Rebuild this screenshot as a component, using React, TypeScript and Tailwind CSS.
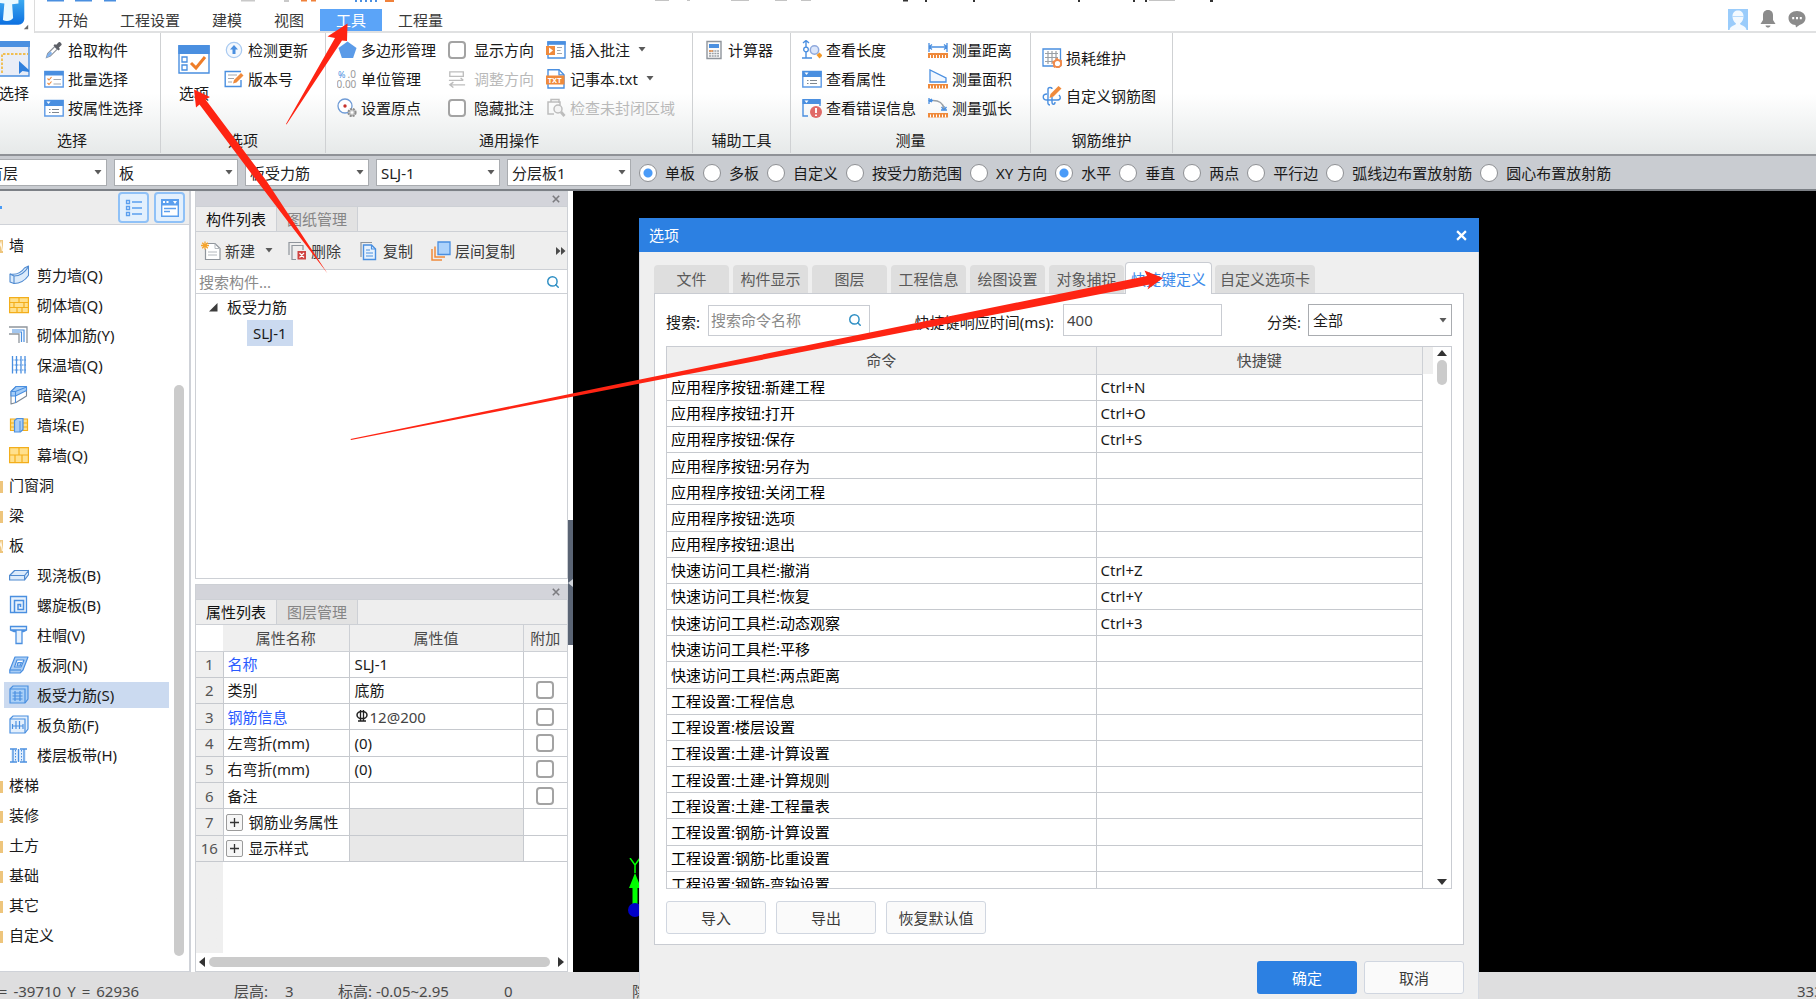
import React from "react";
import { Search } from "lucide-react";

const B = "#4a8fe0";
const O = "#ef8a3c";
const G = "#9a9a9a";

type IconProps = { name: string; className?: string };

const drawings: Record<string, React.ReactNode> = {
  dropper: (
    <>
      <path d="M2.5 17.5l1.2-4 7-7 2.6 2.6-7 7z" fill="#fff" stroke="#8a9099" strokeWidth="1.2" />
      <path d="M2 18l2-4.500 3-2 1 2-3 3z" fill="#7fb2f0" />
      <path d="M9.500 5.500l5 5 1.500-1.500-1.200-1.300 2.700-2.700c1-1-1.800-3.800-2.800-2.800L12 4.900 11 4z" fill="#5c5f66" />
    </>
  ),
  batch: (
    <>
      <path d="M.8 2.500h18.400v15.500H.8z" fill="#fff" stroke="#5d9ae6" strokeWidth="1.4" />
      <path d="M.5 2h19v4.500H.5z" fill={B} />
      <path d="M3.500 9.500l1.500 1.500 2.500-3M3.500 14l1.500 1.500 2.500-3" fill="none" stroke={O} strokeWidth="1.1" />
      <path d="M9.500 10.500h7.500M9.500 15h7.500" stroke="#a3a8ae" strokeWidth="1.2" />
    </>
  ),
  props: (
    <>
      <path d="M.8 2.500h18.400v15.500H.8z" fill="#fff" stroke="#5d9ae6" strokeWidth="1.4" />
      <path d="M.5 2h19v6H.5z" fill={B} />
      <path d="M2.500 3.500h4L4.500 6z" fill="#fff" />
      <path d="M5 11.500h1.500M8 11.500h7M5 14.500h1.500M8 14.500h7" stroke="#7f8790" strokeWidth="1.2" />
    </>
  ),
  update: (
    <>
      <circle cx="10" cy="10" r="7.700" fill="#f3f8fe" stroke="#a9caf1" strokeWidth="1.200" />
      <path d="M10 5l4 4.500h-2.500V14h-3V9.500H6z" fill={B} />
    </>
  ),
  version: (
    <>
      <path d="M17 11v6.500H1.200V2.500H17" fill="#fff" stroke={B} strokeWidth="1.400" />
      <path d="M4 6h9M4 9.500h6M4 13h4" stroke="#a3a8ae" strokeWidth="1.200" />
      <path d="M9 14.500l1-3.500 7-7 2.500 2.500-7 7z" fill={O} />
    </>
  ),
  pentagon: <path d="M10.500 1.500l9 6.500-3.400 10H4.900L1.500 8z" fill="#5b9be8" />,
  units: (
    <>
      <text x="1" y="9" fontSize="9" fill={B} fontFamily="Noto Sans">%</text>
      <text x="10.500" y="9" fontSize="10" fill={G} fontFamily="Noto Sans">.0</text>
      <text x="-.500" y="18.500" fontSize="10" fill={G} fontFamily="Noto Sans">0.00</text>
    </>
  ),
  origin: (
    <>
      <circle cx="8" cy="8" r="7" fill="#fff" stroke="#6f9bd6" strokeWidth="1.300" />
      <circle cx="8" cy="8" r="1.700" fill="#c8322c" />
      <circle cx="15" cy="14.500" r="3.600" fill="#c9c9c9" stroke="#8e8e8e" strokeWidth="2" strokeDasharray="2 .9" />
      <circle cx="15" cy="14.500" r="1.300" fill="#fff" />
    </>
  ),
  adjust: (
    <g fill="none" stroke="#bdbdbd" strokeWidth="1.500">
      <path d="M2 2h15v5H2zM1 11.500h16M14 9l3 2.500M19 16.500H3M6 13.500l-4 3 4 3" />
    </g>
  ),
  note: (
    <>
      <path d="M2 2h17v16H2z" fill="#fff" stroke={B} strokeWidth="1.400" />
      <path d="M1.300 1.200h18.400v3.600H1.300z" fill={B} />
      <path d="M0 6h9v9H0z" fill={O} />
      <path d="M3 7.500v6l4-3z" fill="#fff" />
      <path d="M11 7.500h5M11 10.500h3.500M11 13.500h5" stroke="#a3a8ae" strokeWidth="1.200" />
    </>
  ),
  txt: (
    <>
      <path d="M2 .8h11l5 5V19H2z" fill="#fff" stroke={B} strokeWidth="1.400" />
      <path d="M13 .8v5h5" fill="none" stroke={B} strokeWidth="1.300" />
      <path d="M0 6.500h18.500v9H0z" fill={O} />
      <text x="1.800" y="14" fontSize="7.500" fontWeight="700" fill="#fff" fontFamily="Noto Sans">TXT</text>
    </>
  ),
  region: (
    <g fill="none" stroke="#bdbdbd" strokeWidth="1.500">
      <path d="M5 4V1.500h8V5M8 16H2V4h12v3" />
      <circle cx="12" cy="11" r="4" fill="#f4f4f4" />
      <path d="M15 14l3.500 4" strokeWidth="2.800" />
    </g>
  ),
  calc: (
    <>
      <path d="M3 1.500h14v17H3z" fill="#fafafa" stroke="#8f959c" strokeWidth="1.400" />
      <path d="M5 4h10v4H5z" fill={B} />
      <path d="M5 11h10M5 13.500h10M5 16h10" stroke="#9aa0a6" strokeWidth="1.300" strokeDasharray="2 .7" />
      <path d="M5 11h4" stroke={O} strokeWidth="1.300" />
    </>
  ),
  length: (
    <>
      <path d="M4 0v18M1 3l3-2.500L7 3M0 18h10" fill="none" stroke={B} strokeWidth="1.400" />
      <circle cx="4" cy="9.500" r="2.300" fill="#fff" stroke={B} strokeWidth="1.300" />
      <circle cx="12.500" cy="10" r="4.200" fill="#dbe6fb" stroke="#8fa9dd" strokeWidth="1.500" />
      <path d="M14.500 15l3-2.500 3 3-3 3z" fill="#f39a2a" />
    </>
  ),
  error: (
    <>
      <path d="M6 18H1V2h17v6" fill="none" stroke={B} strokeWidth="1.400" />
      <path d="M.5 1h18v5H.5z" fill={B} />
      <path d="M2.500 2.500h4L4.500 5z" fill="#fff" />
      <circle cx="14" cy="14" r="6" fill="#e06a68" />
      <path d="M14 10v5M14 16.500v1.500" stroke="#fff" strokeWidth="1.900" />
    </>
  ),
  distance: (
    <>
      <path d="M1 3v9M19 3v9M1 7h18M4 4.500L1 7l3 2.500M16 4.500L19 7l-3 2.500" fill="none" stroke={B} strokeWidth="1.300" />
      <path d="M0 13h20v5H0z" fill={O} />
      <path d="M2.500 18v-3M5.500 18v-3M8.500 18v-3M11.500 18v-3M14.500 18v-3M17.500 18v-3" stroke="#fff" />
    </>
  ),
  area: (
    <>
      <path d="M2 13V1l16 8v4z" fill="#f2f7fe" stroke={B} strokeWidth="1.300" />
      <path d="M0 15h20v4.500H0z" fill={O} />
      <path d="M2.500 19.500v-3M5.500 19.500v-3M8.500 19.500v-3M11.500 19.500v-3M14.500 19.500v-3M17.500 19.500v-3" stroke="#fff" />
    </>
  ),
  arc: (
    <>
      <path d="M1 0v6M1 2.500h4M4 1l-3 1.500L4 4M13 12h6M16 8v4M13.500 9l2.500 3 2.500-3" fill="none" stroke={B} strokeWidth="1.300" />
      <path d="M5 2.500c6 0 10 3 11 8" fill="none" stroke="#9aa0a6" strokeWidth="1.300" />
      <path d="M0 15h20v4.500H0z" fill={O} />
      <path d="M2.500 19.500v-3M5.500 19.500v-3M8.500 19.500v-3M11.500 19.500v-3M14.500 19.500v-3M17.500 19.500v-3" stroke="#fff" />
    </>
  ),
  loss: (
    <>
      <path d="M1 1h17.500v17H1z" fill="#fff" stroke={B} strokeWidth="1.300" />
      <path d="M6 3v13M10 3v13M14 3v13M3 5.500h13M3 9.500h13M3 13.500h13" stroke="#9aa0a6" strokeWidth="1.200" />
      <circle cx="15.500" cy="15.500" r="3.600" fill="#fff" stroke="#f08a4b" strokeWidth="2" />
      <circle cx="15.500" cy="15.500" r="4.600" fill="none" stroke="#f08a4b" strokeWidth="1.600" strokeDasharray="2.400 2.400" />
    </>
  ),
  rebar: (
    <>
      <path d="M8 19c-3 0-2-3-2-8V3c0-2 4-2 4 0M5 8c-5 0-5 6 0 6h10c4 0 4-3 2-5M10 11v5c0 3 3 3 3 0" fill="none" stroke={B} strokeWidth="1.400" />
      <path d="M7.500 12l1-4 8-8 3 2.500-8 8z" fill={O} />
    </>
  ),
  shear: (
    <g fill="#dcebfb" stroke="#4f8ad0" strokeWidth="1.100" strokeLinejoin="round">
      <path d="M1 9c6 1 11-1 14.500-6L19.500 1v9.500C16 15.500 11 18.500 5 18.500L1 17z" />
      <path d="M5 18.500V11c6 0 11-3.500 14.500-9.500M1 9l4 2" fill="none" />
    </g>
  ),
  brick: (
    <>
      <path d="M.6 2.600h18.800v15H.6z" fill="#ffe08d" stroke="#f3ae1b" strokeWidth="1.200" />
      <path d="M.6 7.500h18.800M.6 12.500h18.800M10 2.500v5M5 7.500v5M15 7.500v5M8 12.500v5M13 12.500v5" stroke="#f3ae1b" strokeWidth="1.200" />
    </>
  ),
  corner: (
    <>
      <path d="M0 2h18v16M0 9h10v9" fill="none" stroke="#8f959c" strokeWidth="1.300" />
      <path d="M3 5h12v12M3 7h9.500v10" fill="none" stroke={B} strokeWidth="1.200" />
    </>
  ),
  grid: (
    <>
      <path d="M3.500 1v17.500M7.500 1v17.500M12 1v17.500M16 1v17.500" stroke={B} strokeWidth="1.300" />
      <path d="M3 5h14M3 10h14M3 15h14" stroke={B} strokeDasharray="1.500 1" strokeWidth="1.200" />
    </>
  ),
  beam: (
    <>
      <path d="M2 6.500L7 2h10.500v9L7 17.500 2 19z" fill="#fff" stroke="#7d8894" strokeWidth="1.100" strokeLinejoin="round" />
      <path d="M2 6.500L7 1.500h10.500v4L6.500 11 2 11z" fill="#a5cdf6" stroke={B} strokeWidth="1.100" strokeLinejoin="round" />
      <path d="M2 6.500h4.500L17.500 2M6.500 6.500V18" fill="none" stroke={B} strokeWidth="1.100" />
    </>
  ),
  pier: (
    <>
      <path d="M1.500 4h17v11.500h-17z" fill="#ffe08d" stroke="#f3ae1b" strokeWidth="1.200" />
      <path d="M1.500 8h17M1.500 12h17" stroke="#f3ae1b" />
      <path d="M5.500 5.500l2.500-2h6v11l-2.500 2.500h-6z" fill="#a9cdf5" stroke={B} strokeWidth="1.200" />
      <path d="M11 6v11" stroke={B} />
    </>
  ),
  curtain: (
    <>
      <path d="M.6 2.600h18.800v15H.6z" fill="#ffe08d" stroke="#f3ae1b" strokeWidth="1.200" />
      <path d="M.6 10h18.800M10 2.500V10M13 10v7.500M6 10v7.500" stroke="#f3ae1b" strokeWidth="1.200" />
    </>
  ),
  slab: (
    <g fill="#dcebfb" stroke="#4f8ad0" strokeWidth="1.200" strokeLinejoin="round">
      <path d="M.6 10.500l5-5h14l-4 5zM.6 10.500h15V15H.6zM15.600 10.500l4-5v4l-4 5.500z" />
    </g>
  ),
  spiral: (
    <g fill="none" stroke={B} strokeWidth="1.300">
      <path d="M1.500 1.500h16v16h-16z" fill="#e8f2fd" />
      <path d="M5.500 17.500v-12h9v9H9v-5h2.500v2.500" strokeWidth="1.500" />
    </g>
  ),
  column: (
    <path d="M1.500 1.500h16V5l-3 1.500h-1.500v12H7v-12H5L1.500 5zM1.500 5h16" fill="#e8f2fd" stroke={B} strokeWidth="1.300" />
  ),
  hole: (
    <g stroke={B} strokeWidth="1.200" strokeLinejoin="round">
      <path d="M6 2h13l-5 13-3 3H.8v-3z" fill="#a9cdf5" />
      <path d="M8 5h7l-3 7H5.500z" fill="#fff" />
      <path d="M9 7.500h3.500L11 11H8z" fill="#a9cdf5" />
      <path d="M.8 15h11.200" fill="none" />
    </g>
  ),
  rebarS: (
    <g stroke={B} strokeWidth="1.200" fill="#a9cff7">
      <path d="M1 4l3-3h15v13l-3 4H1z" />
      <path d="M1 4h15v14" fill="none" />
      <path d="M3.500 8h10M3.500 14h10M6 6v10M11 6v10M3.500 11h10" fill="none" />
    </g>
  ),
  rebarF: (
    <g stroke={B} strokeWidth="1.200" fill="#e3effc">
      <path d="M1 4l3-3h15v13l-3 4H1z" />
      <path d="M1 4h15v14" fill="none" />
      <path d="M7 6v8M10.500 6v8M3.500 11h10.500M3.500 14V9M14 14V9" fill="none" />
    </g>
  ),
  strip: (
    <>
      <path d="M2 4.500h15v12H2z" fill="#e3effc" />
      <path d="M1 4h7M11 4h7M1 17h7M11 17h7M4 4v13M9.500 4v13M15 4v13" stroke={B} strokeWidth="1.300" />
      <path d="M6.500 5v11M12.500 5v11" stroke={B} strokeDasharray="1.500 1.500" />
    </>
  ),
  create: (
    <>
      <path d="M5 2.500h9l5 5V18.500H4.500V8" fill="#fff" stroke="#8f959c" strokeWidth="1.200" />
      <path d="M14 2.500v5h5M7 11h9M7 14h9" fill="none" stroke="#b4b9be" />
      <path d="M4 .5v8M0 4.500h8M1.200 1.700l5.600 5.600M6.800 1.700L1.200 7.300" stroke="#f5a32b" strokeWidth="1.300" />
    </>
  ),
  remove: (
    <>
      <path d="M2 14V1.500h12M9 18.500H5V4.500h11V9" fill="none" stroke="#8f959c" strokeWidth="1.200" />
      <path d="M10.500 10h8.500v8.500h-8.500z" fill="#cf4442" />
      <path d="M12.500 12l4.500 4.500M17 12l-4.500 4.500" stroke="#fff" strokeWidth="1.200" />
    </>
  ),
  copy: (
    <>
      <path d="M2 16V1.500h11" fill="none" stroke="#8f959c" strokeWidth="1.200" />
      <path d="M4.500 4h8l4 4v10.500h-12z" fill="#e8f2fd" stroke={B} strokeWidth="1.400" />
      <path d="M7 9h4M7 12h7M7 15h7M12.500 4v4h4" fill="none" stroke={B} strokeWidth="1.200" />
    </>
  ),
  layers: (
    <>
      <path d="M1 8v11h10M4 5.500v10.500h10" fill="none" stroke={O} strokeWidth="1.500" />
      <path d="M7 1h12v12.500H7z" fill="#acd2fb" stroke={B} strokeWidth="1.300" />
    </>
  ),
};

function Icon({ name, className = "size-5 shrink-0" }: IconProps) {
  return (
    <svg viewBox="0 0 20 20" className={className} aria-hidden="true">
      {drawings[name]}
    </svg>
  );
}

function Caret({ className = "" }: { className?: string }) {
  return (
    <svg viewBox="0 0 8 5" className={`h-[5px] w-2 shrink-0 ${className}`} aria-hidden="true">
      <path d="M.5 0h7L4 4.500z" fill="#5a5a5a" />
    </svg>
  );
}

function CloseMark({ className }: { className: string }) {
  return (
    <svg viewBox="0 0 10 10" className={className} aria-hidden="true">
      <path d="M1 1l8 8M9 1L1 9" stroke="currentColor" strokeWidth="2" />
    </svg>
  );
}

function Tool({ icon, label, caret, disabled, tall }: { icon: string; label: string; caret?: boolean; disabled?: boolean; tall?: boolean }) {
  return (
    <button
      type="button"
      disabled={disabled}
      className={`flex items-center gap-1 whitespace-nowrap ${tall ? "h-[38px]" : "h-[29px]"} ${disabled ? "text-[#b9b9b9]" : "text-[#1a1a1a]"}`}
    >
      <Icon name={icon} />
      {label}
      {caret && <Caret className="ml-1" />}
    </button>
  );
}

function ToolCheck({ label }: { label: string }) {
  return (
    <label className="flex h-[29px] items-center gap-2 whitespace-nowrap">
      <input type="checkbox" className="size-[18px] shrink-0 appearance-none rounded-[4px] border-2 border-[#a3a3a3] bg-white checked:bg-[#4a9bf5]" />
      {label}
    </label>
  );
}

function Group({ label, className, children }: { label: string; className: string; children: React.ReactNode }) {
  return (
    <section className={`flex shrink-0 flex-col border-r border-[#cfd1d3] ${className}`}>
      <div className="flex flex-1 items-start pt-[2px]">{children}</div>
      <h2 className="h-[26px] text-center leading-[26px]">{label}</h2>
    </section>
  );
}

function BigTool({ label, children }: { label: string; children: React.ReactNode }) {
  return (
    <button type="button" className="mr-[14px] flex w-8 shrink-0 flex-col items-center pt-[6px]">
      {children}
      <span className="whitespace-nowrap leading-8">{label}</span>
    </button>
  );
}

const menuTabs = ["开始", "工程设置", "建模", "视图", "工具", "工程量"];

function TitleBar() {
  return (
    <header className="flex h-[33px] shrink-0 overflow-hidden bg-white">
      <div className="relative h-full w-[35px] shrink-0 border-r border-[#dcdcdc]">
        <svg viewBox="0 0 35 33" className="h-full w-full" aria-hidden="true">
          <defs>
            <linearGradient id="logo" x1="0" y1="0" x2="0" y2="1">
              <stop offset="0" stopColor="#52c4f7" />
              <stop offset="1" stopColor="#0c6fe0" />
            </linearGradient>
          </defs>
          <rect x="-12" y="-12" width="37" height="37" rx="6" fill="url(#logo)" />
          <path d="M-6-2h25v5l-6.500 1 1 14c-2 3-7 4-10.500 2L4.500 3-6 2z" fill="#eafaff" />
          <path d="M29 25v4.500h-4.500z" fill="#6a6a6a" />
        </svg>
      </div>
      <nav className="relative flex min-w-0 flex-1 items-end border-b-2 border-[#e0e1e2] pl-[7px]">
        <svg viewBox="0 0 1240 3" className="absolute left-0 top-0 h-[3px] w-[1240px]" aria-hidden="true">
          <path d="M12 0h17v1.500H12zM40 0h17v1.500H40zM69 0h12v1.500H69z" fill={B} />
          <path d="M206 0h14v1.500h-14zM249 0h5v2h-5z" fill="#c9c9c9" />
          <path d="M266 0h6v1.500h-6zM276 0h5v1.500h-5zM350 0h9v2h-9z" fill="#f0813a" />
          <path d="M320 0h2v2h-2zM325 0h2v2h-2zM330 0h2v2h-2zM335 0h2v2h-2zM340 0h2v2h-2z" fill={B} />
          <path d="M620 0h14v1h-14zM652 0h3v1h-3zM696 0h18v1h-18zM740 0h12v1h-12zM766 0h10v1h-10zM1114 0h26v1h-26z" fill="#c4c4c4" />
          <path d="M868 0h5v1.500h-5zM890 0h2v2h-2zM938 0h2v2h-2zM1043 0h2v2h-2zM1098 0h2v2h-2zM1110 0h2v2h-2zM1175 0h3v2h-3z" fill="#333" />
        </svg>
        {menuTabs.map((t) => (
          <button
            type="button"
            key={t}
            className={`h-[22px] whitespace-nowrap px-4 leading-[22px] ${t === "工具" ? "bg-[#5ba4f8] text-white" : "text-[#3a3a3a]"}`}
          >
            {t}
          </button>
        ))}
        <div className="mb-px ml-auto flex h-[22px] items-center gap-3 pr-[10px]">
          <svg viewBox="0 0 20 21" className="h-[21px] w-5" aria-hidden="true">
            <path d="M0 0h20v21H0z" fill="#9accfb" />
            <path d="M4.500 7C4.500 3.500 7 1.500 10 1.500S15.500 3.500 15.500 7c0 3-1 5.500-3.500 7.500 0 2 6 2 6.500 6.500h-17C2 16.500 8 16.500 8 14.500 5.500 12.500 4.500 10 4.500 7z" fill="#f4faff" />
            <path d="M4 7.500h12" stroke="#b9dbfb" />
          </svg>
          <svg viewBox="0 0 16 18" className="h-[18px] w-4" aria-hidden="true">
            <path d="M8 0c3.500 0 5 2.500 5 5v5l2.500 4H.5L3 10V5c0-2.500 1.500-5 5-5zM5.500 15.500h5c-.5 2.800-4.500 2.800-5 0z" fill="#8b8b8b" />
          </svg>
          <svg viewBox="0 0 18 18" className="size-[18px]" aria-hidden="true">
            <path d="M9 1c5 0 8.500 3 8.500 7 0 3.500-2.500 6.200-6 6.900L8 17.500 7.500 15C3.500 14.800.5 12 .5 8 .5 4 4 1 9 1z" fill="#8b8b8b" />
            <path d="M4.200 7h2v2.200h-2zM8 7h2v2.200H8zM11.800 7h2v2.200h-2z" fill="#fff" />
          </svg>
        </div>
      </nav>
    </header>
  );
}

function Ribbon() {
  return (
    <div className="h-[121px] shrink-0 overflow-hidden bg-linear-to-b from-white from-50% to-[#e6e9e9]">
      <div className="-ml-4 flex h-[120px]">
        <Group label="选择" className="w-[177px]">
          <div className="flex pl-[14px]">
            <BigTool label="选择">
              <svg viewBox="0 0 32 36" className="h-9 w-8" aria-hidden="true">
                <path d="M0 1h31v34H0z" fill="#e9edf7" stroke={B} strokeWidth="1.400" />
                <path d="M0 0h32v6H0z" fill={B} />
                <path d="M4 32V13h26" fill="none" stroke="#f3ae1b" strokeWidth="1.400" strokeDasharray="2.500 1.500" />
                <path d="M21 20v13l3.500-3 6.500 1v-2z" fill="#2f7fdc" />
              </svg>
            </BigTool>
            <div className="flex flex-col">
              <Tool icon="dropper" label="拾取构件" />
              <Tool icon="batch" label="批量选择" />
              <Tool icon="props" label="按属性选择" />
            </div>
          </div>
        </Group>
        <Group label="选项" className="w-[165px]">
          <div className="flex pl-[17px]">
            <BigTool label="选项">
              <svg viewBox="0 0 32 36" className="h-9 w-8" aria-hidden="true">
                <path d="M1 5h30v27H1z" fill="#fff" stroke={B} strokeWidth="1.400" />
                <path d="M.3 4h31.400v9H.3z" fill={B} />
                <path d="M4 16h5v5H4zM4 24h5v5H4z" fill="#fff" stroke={B} strokeWidth="1.300" />
                <path d="M13 22l5 5 9-11" fill="none" stroke="#ef7d28" strokeWidth="3" />
              </svg>
            </BigTool>
            <div className="flex flex-col">
              <Tool icon="update" label="检测更新" />
              <Tool icon="version" label="版本号" />
            </div>
          </div>
        </Group>
        <Group label="通用操作" className="w-[367px]">
          <div className="flex gap-3 pl-[11px]">
            <div className="flex flex-col">
              <Tool icon="pentagon" label="多边形管理" />
              <Tool icon="units" label="单位管理" />
              <Tool icon="origin" label="设置原点" />
            </div>
            <div className="flex flex-col">
              <ToolCheck label="显示方向" />
              <button type="button" disabled className="flex h-[29px] items-center gap-2 whitespace-nowrap text-[#b9b9b9]">
                <Icon name="adjust" className="size-[18px] shrink-0" />
                调整方向
              </button>
              <ToolCheck label="隐藏批注" />
            </div>
            <div className="flex flex-col">
              <Tool icon="note" label="插入批注" caret />
              <Tool icon="txt" label="记事本.txt" caret />
              <Tool icon="region" label="检查未封闭区域" disabled />
            </div>
          </div>
        </Group>
        <Group label="辅助工具" className="w-[98px]">
          <div className="flex pl-[11px]">
            <Tool icon="calc" label="计算器" />
          </div>
        </Group>
        <Group label="测量" className="w-[240px]">
          <div className="flex gap-3 pl-[11px]">
            <div className="flex flex-col">
              <Tool icon="length" label="查看长度" />
              <Tool icon="props" label="查看属性" />
              <Tool icon="error" label="查看错误信息" />
            </div>
            <div className="flex flex-col">
              <Tool icon="distance" label="测量距离" />
              <Tool icon="area" label="测量面积" />
              <Tool icon="arc" label="测量弧长" />
            </div>
          </div>
        </Group>
        <Group label="钢筋维护" className="w-[142px]">
          <div className="flex flex-col pl-[11px] pt-1">
            <Tool icon="loss" label="损耗维护" tall />
            <Tool icon="rebar" label="自定义钢筋图" tall />
          </div>
        </Group>
      </div>
    </div>
  );
}

const combos = [
  ["楼层", "首层"],
  ["构件大类", "板"],
  ["构件类型", "板受力筋"],
  ["构件", "SLJ-1"],
  ["分层", "分层板1"],
];

const areaModes = ["单板", "多板", "自定义", "按受力筋范围"];
const directionModes = ["XY 方向", "水平", "垂直", "两点", "平行边", "弧线边布置放射筋", "圆心布置放射筋"];

function Radio({ name, label, on }: { name: string; label: string; on: boolean }) {
  return (
    <label className="flex items-center gap-2 whitespace-nowrap">
      <input
        type="radio"
        name={name}
        defaultChecked={on}
        className="size-[18px] shrink-0 appearance-none rounded-full border border-[#8e9094] bg-white checked:bg-[radial-gradient(circle,#4a9bf8_0_4px,#fff_5px)]"
      />
      {label}
    </label>
  );
}

function OptionBar() {
  return (
    <div className="flex h-[37px] shrink-0 items-center overflow-hidden border-y-2 border-t-[#8f9297] border-b-[#7c8086] bg-[#c9ccd1]">
      <div className="-ml-[17px] flex gap-[7px]">
        {combos.map(([name, value]) => (
          <div key={name} className="relative flex w-[124px] items-center">
            <select aria-label={name} className="h-[27px] w-full appearance-none border border-[#a9acb0] bg-white pl-1 text-[#222]">
              <option>{value}</option>
            </select>
            <Caret className="pointer-events-none absolute right-[5px]" />
          </div>
        ))}
      </div>
      <div className="ml-2 flex gap-2">
        {areaModes.map((m) => (
          <Radio key={m} name="area" label={m} on={m === "单板"} />
        ))}
        {directionModes.map((m) => (
          <Radio key={m} name="direction" label={m} on={m === "水平"} />
        ))}
      </div>
    </div>
  );
}

type Node = { label: string; icon?: string; open?: boolean };
const nodes: Node[] = [
  { label: "墙", open: true },
  { label: "剪力墙(Q)", icon: "shear" },
  { label: "砌体墙(Q)", icon: "brick" },
  { label: "砌体加筋(Y)", icon: "corner" },
  { label: "保温墙(Q)", icon: "grid" },
  { label: "暗梁(A)", icon: "beam" },
  { label: "墙垛(E)", icon: "pier" },
  { label: "幕墙(Q)", icon: "curtain" },
  { label: "门窗洞" },
  { label: "梁" },
  { label: "板", open: true },
  { label: "现浇板(B)", icon: "slab" },
  { label: "螺旋板(B)", icon: "spiral" },
  { label: "柱帽(V)", icon: "column" },
  { label: "板洞(N)", icon: "hole" },
  { label: "板受力筋(S)", icon: "rebarS" },
  { label: "板负筋(F)", icon: "rebarF" },
  { label: "楼层板带(H)", icon: "strip" },
  { label: "楼梯" },
  { label: "装修" },
  { label: "土方" },
  { label: "基础" },
  { label: "其它" },
  { label: "自定义" },
];

function Sidebar() {
  return (
    <aside className="flex w-[191px] shrink-0 flex-col overflow-hidden border-r-2 border-b border-[#cfd2d8] bg-white">
      <div className="flex h-[34px] shrink-0 items-center justify-end gap-[5px] border-b border-[#cfd2d8] bg-[#ededed] pr-1">
        <span className="mr-auto h-[3px] w-[2px] bg-[#4a9bf5]" />
        <button type="button" aria-label="列表视图" className="flex size-[31px] items-center justify-center rounded border-2 border-[#8fc1f7] bg-[#e3f0fd]">
          <svg viewBox="0 0 18 18" className="size-[18px]" aria-hidden="true">
            <path d="M1.500 1.500h3v3h-3zM1.500 7.500h3v3h-3zM1.500 13.500h3v3h-3zM7 3h10M7 9h10M7 15h10" fill="none" stroke="#5b9fee" strokeWidth="1.300" />
          </svg>
        </button>
        <button type="button" aria-label="面板视图" className="flex size-[31px] items-center justify-center rounded border-2 border-[#8fc1f7] bg-[#e3f0fd]">
          <svg viewBox="0 0 18 18" className="size-[18px]" aria-hidden="true">
            <path d="M.7.700h16.600v16.600H.7z" fill="#fff" stroke="#5b9fee" strokeWidth="1.400" />
            <path d="M0 0h18v6.500H0z" fill="#5b9fee" />
            <path d="M2 2h2v2H2zM5.500 2h2v2h-2zM12 2h4l-2 3z" fill="#fff" />
            <path d="M3 9.500h12M3 12.500h6" stroke="#5b9fee" strokeWidth="1.400" />
          </svg>
        </button>
      </div>
      <div className="flex min-h-0 flex-1">
        <ul className="min-w-0 flex-1 pt-[5px]">
          {nodes.map((n) =>
            n.icon ? (
              <li key={n.label} className="flex h-[30px] items-center">
                <button
                  type="button"
                  className={`ml-1 flex h-[26px] w-full items-center gap-2 pl-[5px] text-[#1a1a1a] ${n.icon === "rebarS" ? "bg-[#cbdaf0]" : ""}`}
                >
                  <Icon name={n.icon} />
                  {n.label}
                </button>
              </li>
            ) : (
              <li key={n.label} className="flex h-[30px] items-center">
                <button type="button" className="-ml-3 flex items-center gap-[5px] text-[#1a1a1a]">
                  <svg viewBox="0 0 16 16" className="size-4" aria-hidden="true">
                    <path d="M1 1h7v2h7v13H1z" fill="#eec57c" />
                    {n.open ? <path d="M10 14l3-8 1.500 8" fill="none" stroke="#fff6e4" strokeWidth="1.300" /> : <path d="M1 3.500h14" stroke="#fff" />}
                  </svg>
                  {n.label}
                </button>
              </li>
            ),
          )}
        </ul>
        <div className="mx-[5px] mt-[160px] mb-[15px] w-[10px] rounded-full bg-[#cbcbcb]" />
      </div>
    </aside>
  );
}

function PanelHead({ active, other }: { active: string; other: string }) {
  return (
    <>
      <div className="flex h-[14px] shrink-0 items-center justify-end bg-[#d3d4da] pr-[7px] text-[#7c7c80]">
        <button type="button" aria-label="关闭">
          <CloseMark className="size-[8px]" />
        </button>
      </div>
      <div className="flex h-[26px] shrink-0 border-y border-[#cdd0d5] bg-[#eeeeee]">
        <button type="button" className="border-r border-[#cdd0d5] px-[10px] text-[#111]">{active}</button>
        <button type="button" className="border-r border-[#cdd0d5] bg-[#e2e2e2] px-[10px] text-[#858585]">{other}</button>
      </div>
    </>
  );
}

function ComponentPanel() {
  return (
    <section className="flex h-[388px] shrink-0 flex-col border border-[#cdd0d5] bg-white">
      <PanelHead active="构件列表" other="图纸管理" />
      <div className="flex h-[38px] shrink-0 items-center border-b border-[#cdd0d5] bg-[#eeeeee] pl-[5px] text-[#3a3a3a]">
        <button type="button" className="mr-[14px] flex items-center gap-1">
          <Icon name="create" />
          新建
          <Caret className="ml-[6px]" />
        </button>
        <button type="button" className="mr-[18px] flex items-center gap-1">
          <Icon name="remove" />
          删除
        </button>
        <button type="button" className="mr-[18px] flex items-center gap-1">
          <Icon name="copy" />
          复制
        </button>
        <button type="button" className="flex items-center gap-1">
          <Icon name="layers" />
          层间复制
        </button>
        <button type="button" aria-label="更多" className="ml-auto pr-px">
          <svg viewBox="0 0 10 8" className="h-2 w-[10px]" aria-hidden="true">
            <path d="M0 0l4.500 4L0 8zM5 0l4.500 4L5 8z" fill="#4a4a4a" />
          </svg>
        </button>
      </div>
      <div className="flex h-6 shrink-0 items-center border-b border-[#cdd0d5] pr-[7px]">
        <input aria-label="搜索构件" placeholder="搜索构件..." className="min-w-0 flex-1 pl-[3px] outline-none placeholder:text-[#8a8a8a]" />
        <Search className="size-[14px] text-[#2f8fc4]" strokeWidth={2.500} />
      </div>
      <ul className="pl-[13px] text-[#1a1a1a]">
        <li>
          <button type="button" className="flex h-[26px] items-center gap-[9px]">
            <svg viewBox="0 0 9 9" className="size-[9px]" aria-hidden="true">
              <path d="M8.500 0v8.500H0z" fill="#3c3c3c" />
            </svg>
            板受力筋
          </button>
          <ul className="pl-[38px]">
            <li>
              <button type="button" className="h-[26px] bg-[#cbdaf0] px-[6px]">SLJ-1</button>
            </li>
          </ul>
        </li>
      </ul>
    </section>
  );
}

type Prop = { n: number; name: string; value?: string; link?: boolean; check?: boolean; group?: boolean; bar?: boolean };
const propRows: Prop[] = [
  { n: 1, name: "名称", value: "SLJ-1", link: true },
  { n: 2, name: "类别", value: "底筋", check: true },
  { n: 3, name: "钢筋信息", value: "12@200", link: true, check: true, bar: true },
  { n: 4, name: "左弯折(mm)", value: "(0)", check: true },
  { n: 5, name: "右弯折(mm)", value: "(0)", check: true },
  { n: 6, name: "备注", value: "", check: true },
  { n: 7, name: "钢筋业务属性", group: true },
  { n: 16, name: "显示样式", group: true },
];

function PropertyPanel() {
  return (
    <section className="mt-[5px] flex min-h-0 flex-1 flex-col border border-[#cdd0d5] bg-white">
      <PanelHead active="属性列表" other="图层管理" />
      <div className="flex min-h-0 flex-1 flex-col bg-linear-to-r from-[#efefef] from-[27px] to-white to-[27px]">
        <table className="h-[237px] w-full table-fixed border-collapse">
          <colgroup>
            <col className="w-[27px]" />
            <col className="w-[126px]" />
            <col />
            <col className="w-[44px]" />
          </colgroup>
          <thead>
            <tr className="h-[26px] text-[#4a4a4a]">
              <th className="border-b border-[#cdd0d5] bg-white font-normal" />
              <th className="border-r border-b border-[#cdd0d5] bg-[#efefef] p-0 font-normal">属性名称</th>
              <th className="border-r border-b border-[#cdd0d5] bg-[#efefef] p-0 font-normal">属性值</th>
              <th className="border-b border-[#cdd0d5] bg-[#efefef] p-0 font-normal whitespace-nowrap">附加</th>
            </tr>
          </thead>
          <tbody>
            {propRows.map((r) => (
              <tr key={r.n} className="bg-white text-[#1a1a1a]">
                <td className="border-r border-b border-[#c6c9ce] bg-[#efefef] p-0 text-center text-[#555]">{r.n}</td>
                <td className={`border-r border-b border-[#c6c9ce] p-0 ${r.link ? "text-[#2a5bff]" : ""}`}>
                  <div className={`flex items-center whitespace-nowrap ${r.group ? "pl-[2px]" : "pl-1"}`}>
                    {r.group && (
                      <button type="button" aria-label={`展开${r.name}`} className="mr-[6px] flex size-[17px] items-center justify-center rounded-[2px] border border-[#9b9b9b] bg-[#f6f6f6]">
                        <svg viewBox="0 0 9 9" className="size-[9px]" aria-hidden="true">
                          <path d="M4.500 0v9M0 4.500h9" stroke="#333" strokeWidth="1.300" />
                        </svg>
                      </button>
                    )}
                    {r.name}
                  </div>
                </td>
                <td className={`border-r border-b border-[#c6c9ce] p-0 ${r.group ? "bg-[#e8e8e8]" : ""}`}>
                  <div className={`flex items-center pl-[5px] ${r.bar ? "text-[#444]" : ""}`}>
                    {r.bar && (
                      <svg viewBox="0 0 14 14" className="mr-px size-[14px]" aria-hidden="true">
                        <ellipse cx="7" cy="5" rx="5" ry="3.600" fill="none" stroke="#222" strokeWidth="1.500" />
                        <path d="M5.500 0v11M8.500 0v11M3 11h8" stroke="#222" strokeWidth="1.300" />
                      </svg>
                    )}
                    {r.value}
                  </div>
                </td>
                <td className="border-b border-[#c6c9ce] p-0">
                  {r.check && (
                    <div className="flex justify-center">
                      <input type="checkbox" aria-label={`附加${r.name}`} className="size-[18px] appearance-none rounded-[4px] border-2 border-[#a3a3a3] bg-white" />
                    </div>
                  )}
                </td>
              </tr>
            ))}
          </tbody>
        </table>
      </div>
      <div className="flex h-[18px] shrink-0 items-center gap-1 px-[3px]">
        <svg viewBox="0 0 6 10" className="h-[10px] w-[6px]" aria-hidden="true">
          <path d="M6 0v10L0 5z" fill="#333" />
        </svg>
        <div className="mr-1 h-[10px] flex-1 rounded-full bg-[#cbcbcb]" />
        <svg viewBox="0 0 6 10" className="h-[10px] w-[6px]" aria-hidden="true">
          <path d="M0 0v10l6-5z" fill="#333" />
        </svg>
      </div>
    </section>
  );
}

const commands: [string, string][] = [
  ["应用程序按钮:新建工程", "Ctrl+N"],
  ["应用程序按钮:打开", "Ctrl+O"],
  ["应用程序按钮:保存", "Ctrl+S"],
  ["应用程序按钮:另存为", ""],
  ["应用程序按钮:关闭工程", ""],
  ["应用程序按钮:选项", ""],
  ["应用程序按钮:退出", ""],
  ["快速访问工具栏:撤消", "Ctrl+Z"],
  ["快速访问工具栏:恢复", "Ctrl+Y"],
  ["快速访问工具栏:动态观察", "Ctrl+3"],
  ["快速访问工具栏:平移", ""],
  ["快速访问工具栏:两点距离", ""],
  ["工程设置:工程信息", ""],
  ["工程设置:楼层设置", ""],
  ["工程设置:土建-计算设置", ""],
  ["工程设置:土建-计算规则", ""],
  ["工程设置:土建-工程量表", ""],
  ["工程设置:钢筋-计算设置", ""],
  ["工程设置:钢筋-比重设置", ""],
  ["工程设置:钢筋-弯钩设置", ""],
];

const dialogTabs = ["文件", "构件显示", "图层", "工程信息", "绘图设置", "对象捕捉"];

function OptionsDialog() {
  return (
    <div role="dialog" aria-label="选项" className="absolute top-[218px] -bottom-[9px] left-[639px] flex w-[840px] flex-col border-x border-[#d5dae2] bg-[#efefef] text-[#1a1a1a]">
      <div className="-mx-px flex h-[34px] shrink-0 items-center justify-between bg-[#2c80e2] px-[10px] text-white">
        <h1>选项</h1>
        <button type="button" aria-label="关闭对话框" className="pr-[2px]">
          <CloseMark className="size-[11px]" />
        </button>
      </div>
      <div className="flex min-h-0 flex-1 flex-col px-[14px]">
        <div className="flex h-[41px] shrink-0 items-end gap-1 text-[#5a5a5a]">
          {dialogTabs.map((t) => (
            <button type="button" key={t} className="h-7 w-[75px] rounded-t bg-[#dedede]">{t}</button>
          ))}
          <button type="button" className="relative -mb-px -ml-[3px] h-8 w-[87px] rounded-t border border-b-0 border-[#c9ccd2] bg-white text-[#3d8bea]">快捷键定义</button>
          <button type="button" className="-ml-px h-7 w-[100px] rounded-t bg-[#dedede]">自定义选项卡</button>
        </div>
        <div className="flex h-[652px] shrink-0 flex-col border border-[#c9ccd2] bg-white px-[11px]">
          <div className="flex h-[52px] shrink-0 items-center">
            <label htmlFor="cmd-search" className="mr-[7px] w-[35px] pt-[3px] whitespace-nowrap">搜索:</label>
            <div className="flex h-[31px] w-[162px] items-center border border-[#c9ccd2] pr-[7px]">
              <input id="cmd-search" placeholder="搜索命令名称" className="min-w-0 flex-1 pl-[2px] outline-none placeholder:text-[#8a8a8a]" />
              <Search className="size-[14px] text-[#2f8fc4]" strokeWidth={2.500} />
            </div>
            <label htmlFor="delay" className="ml-auto pt-[3px] pl-10 whitespace-nowrap">快捷键响应时间(ms):</label>
            <input id="delay" defaultValue="400" className="ml-[9px] h-[32px] w-[159px] border border-[#c9ccd2] pl-[3px] text-[#444] outline-none" />
            <label htmlFor="category" className="ml-[45px] pt-[3px] whitespace-nowrap">分类:</label>
            <div className="relative ml-[7px] flex w-[144px] items-center">
              <select id="category" className="h-[32px] w-full appearance-none border border-[#a9acb0] bg-white pl-1">
                <option>全部</option>
              </select>
              <Caret className="pointer-events-none absolute right-[5px]" />
            </div>
          </div>
          <div className="flex h-[543px] shrink-0 overflow-hidden border border-[#c9ccd2]">
            <div className="min-w-0 flex-1 overflow-hidden bg-linear-to-b from-[#efefef] from-[27px] to-white to-[27px]">
              <table className="h-[551px] w-[756px] table-fixed border-collapse">
                <colgroup>
                  <col className="w-[429px]" />
                  <col />
                </colgroup>
                <thead>
                  <tr className="h-[27px] bg-[#efefef] text-[#4a4a4a]">
                    <th className="border-r border-b border-[#cdd0d5] p-0 font-normal">命令</th>
                    <th className="border-r border-b border-[#cdd0d5] p-0 font-normal">快捷键</th>
                  </tr>
                </thead>
                <tbody>
                  {commands.map(([name, key]) => (
                    <tr key={name} className="bg-white">
                      <td className="border-r border-b border-[#c6c9ce] p-0 pl-1 text-black">{name}</td>
                      <td className="border-r border-b border-[#c6c9ce] p-0 pl-1">{key}</td>
                    </tr>
                  ))}
                </tbody>
              </table>
            </div>
            <div className="flex w-[18px] shrink-0 flex-col items-center justify-between bg-white py-[3px]">
              <div className="flex flex-col items-center gap-1">
                <svg viewBox="0 0 10 6" className="h-[6px] w-[10px]" aria-hidden="true">
                  <path d="M0 6h10L5 0z" fill="#333" />
                </svg>
                <div className="h-[25px] w-[10px] rounded-full bg-[#cbcbcb]" />
              </div>
              <svg viewBox="0 0 10 6" className="h-[6px] w-[10px]" aria-hidden="true">
                <path d="M0 0h10L5 6z" fill="#333" />
              </svg>
            </div>
          </div>
          <div className="mt-3 flex gap-[10px] text-[#3a3a3a]">
            {["导入", "导出", "恢复默认值"].map((t) => (
              <button type="button" key={t} className="h-[33px] w-[100px] rounded-[3px] border border-[#d0d6e0] bg-[#fafafa]">{t}</button>
            ))}
          </div>
        </div>
        <div className="mt-4 flex justify-end gap-[7px]">
          <button type="button" className="h-[33px] w-[100px] rounded-[3px] bg-[#2c80e2] text-white">确定</button>
          <button type="button" className="h-[33px] w-[100px] rounded-[3px] border border-[#d0d6e0] bg-[#fafafa] text-[#3a3a3a]">取消</button>
        </div>
      </div>
    </div>
  );
}

function StatusBar() {
  return (
    <footer className="flex h-[27px] shrink-0 items-start overflow-hidden bg-[#dededf] pt-[9px] leading-5 text-[#4a4a4a]">
      <div className="-ml-4 flex w-[250px] gap-[6px]">
        <span>X</span>
        <span>=</span>
        <span>-39710</span>
        <span>Y</span>
        <span>=</span>
        <span>62936</span>
      </div>
      <span className="w-[51px]">层高:</span>
      <span className="w-[53px]">3</span>
      <span className="w-[166px]">标高: -0.05~2.95</span>
      <span className="w-[128px]">0</span>
      <span>隐藏</span>
      <span className="ml-auto w-[19px]">333</span>
    </footer>
  );
}

function Pointers() {
  return (
    <svg className="pointer-events-none absolute top-0 left-0 h-[460px] w-[1200px]" viewBox="0 0 1200 460" fill="#fe2413" aria-hidden="true">
      <path d="M286 124L335 38l-7.500-1.500L347.500 23.500 347 41l-5-.5-55.500 84z" />
      <path d="M327.500 273.500L257 181 199.500 104.500l-3.500 3L194 89.500l16 7.500-4.500 2.500L266.500 181z" />
      <path d="M351 440L350.500 439 640 379.500l507-103.500-2.500-5.500L1163 278l-15.500 11.500 2-5L640 383.500z" />
    </svg>
  );
}

export default function App() {
  return (
    <div className="relative flex h-screen flex-col overflow-hidden bg-white font-['Noto_Sans','Noto_Sans_CJK_SC',sans-serif] text-[15px] leading-5 text-[#1a1a1a]">
      <TitleBar />
      <Ribbon />
      <OptionBar />
      <main className="flex min-h-0 flex-1">
        <Sidebar />
        <div className="ml-1 flex w-[373px] shrink-0 flex-col">
          <ComponentPanel />
          <PropertyPanel />
        </div>
        <button type="button" aria-label="收起面板" className="mt-[329px] flex h-[125px] w-[5px] shrink-0 items-center bg-[#5a6474]">
          <svg viewBox="0 0 5 8" className="h-2 w-[5px]" aria-hidden="true">
            <path d="M5 0v8L0 4z" fill="#cfd3d9" />
          </svg>
        </button>
        <div className="relative min-w-0 flex-1 bg-black">
          <svg className="absolute bottom-[54px] left-[54px] h-[60px] w-4" viewBox="0 0 16 60" aria-hidden="true">
            <path d="M3 0l5 7 5-7M8 7v8" fill="none" stroke="#0f0" strokeWidth="1.500" />
            <path d="M8 15l6 15h-3.500v17h-5V30H2z" fill="#0f0" />
            <circle cx="8" cy="52" r="7" fill="#0000c8" />
          </svg>
        </div>
      </main>
      <StatusBar />
      <OptionsDialog />
      <Pointers />
    </div>
  );
}
